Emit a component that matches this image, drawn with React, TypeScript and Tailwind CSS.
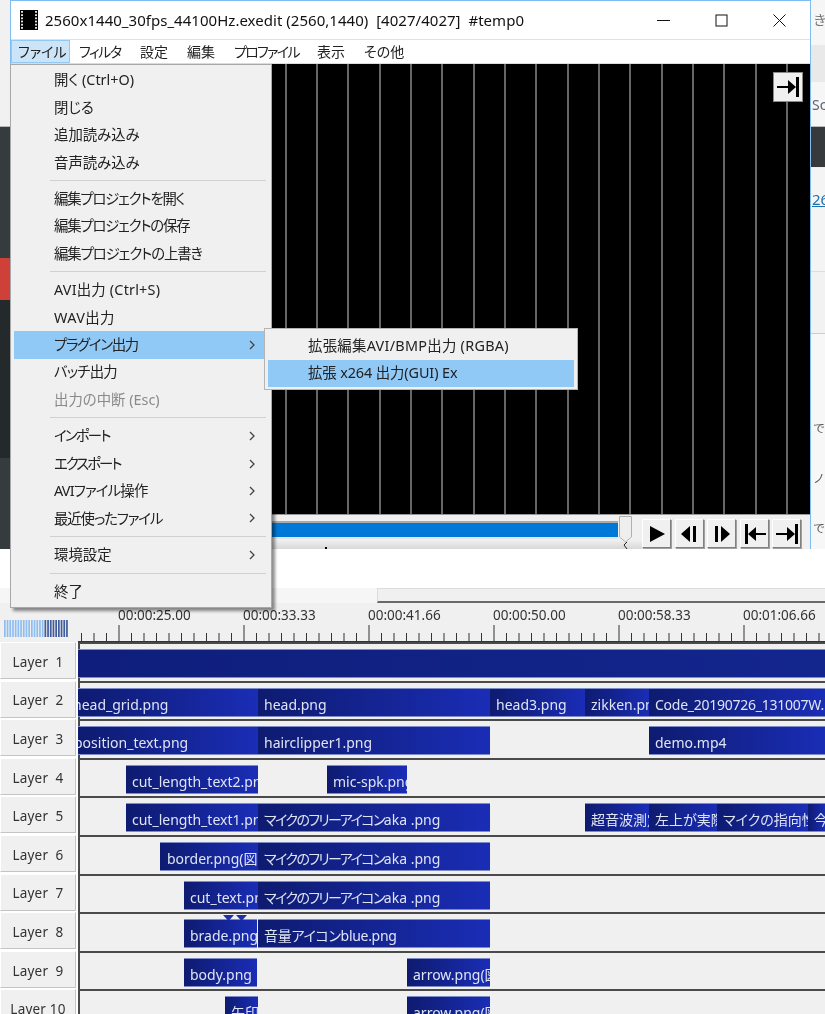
import React from "react";

type ClipDef = [number, number, React.ReactNode, number?, string?];

const aka = (
  <>
    <span className="tracking-[-1.6px]">マイクのフリーアイコン</span>aka .png
  </>
);

const rows: { label: string; clips: ClipDef[] }[] = [
  { label: "Layer  1", clips: [[78, 747, ""]] },
  {
    label: "Layer  2",
    clips: [
      [78, 180, "head_grid.png", -5],
      [258, 232, "head.png"],
      [490, 95, "head3.png"],
      [585, 64, "zikken.png"],
      [649, 176, "Code_20190726_131007W.mp4", 6, "tracking-[-0.25px]"],
    ],
  },
  {
    label: "Layer  3",
    clips: [
      [78, 180, "position_text.png", -4],
      [258, 232, "hairclipper1.png"],
      [649, 176, "demo.mp4"],
    ],
  },
  {
    label: "Layer  4",
    clips: [
      [126, 132, "cut_length_text2.png"],
      [327, 80, "mic-spk.png"],
    ],
  },
  {
    label: "Layer  5",
    clips: [
      [126, 132, "cut_length_text1.png"],
      [258, 232, aka],
      [585, 64, "超音波測定"],
      [649, 68, "左上が実際"],
      [717, 91, "マイクの指向性"],
      [808, 17, "今"],
    ],
  },
  {
    label: "Layer  6",
    clips: [
      [160, 98, "border.png(図形)", 7],
      [258, 232, aka],
    ],
  },
  {
    label: "Layer  7",
    clips: [
      [184, 74, "cut_text.png"],
      [258, 232, aka],
    ],
  },
  {
    label: "Layer  8",
    clips: [
      [184, 73, "brade.png"],
      [258, 232, "音量アイコンblue.png", 6, "tracking-[-0.3px]"],
    ],
  },
  {
    label: "Layer  9",
    clips: [
      [184, 73, "body.png"],
      [407, 83, "arrow.png(図形)"],
    ],
  },
  {
    label: "Layer 10",
    clips: [
      [225, 33, "矢印"],
      [407, 83, "arrow.png(図形)"],
    ],
  },
];

type MenuDef =
  | { text: string; arrow?: boolean; active?: boolean; disabled?: boolean; track?: string }
  | "sep";

const fileMenu: MenuDef[] = [
  { text: "開く (Ctrl+O)" },
  { text: "閉じる" },
  { text: "追加読み込み" },
  { text: "音声読み込み" },
  "sep",
  { text: "編集プロジェクトを開く", track: "tracking-[-1.2px]" },
  { text: "編集プロジェクトの保存", track: "tracking-[-1.2px]" },
  { text: "編集プロジェクトの上書き", track: "tracking-[-1.1px]" },
  "sep",
  { text: "AVI出力 (Ctrl+S)", track: "tracking-[0.2px]" },
  { text: "WAV出力", track: "tracking-[0.4px]" },
  { text: "プラグイン出力", arrow: true, active: true, track: "tracking-[-1.3px]" },
  { text: "バッチ出力", track: "tracking-[-0.8px]" },
  { text: "出力の中断 (Esc)", disabled: true },
  "sep",
  { text: "インポート", arrow: true, track: "tracking-[-1.8px]" },
  { text: "エクスポート", arrow: true, track: "tracking-[-2px]" },
  { text: "AVIファイル操作", arrow: true, track: "tracking-[-0.8px]" },
  { text: "最近使ったファイル", arrow: true, track: "tracking-[-1.1px]" },
  "sep",
  { text: "環境設定", arrow: true },
  "sep",
  { text: "終了" },
];

const menuBar: { text: string; width: string; track?: string; on?: boolean }[] = [
  { text: "ファイル", width: "w-[59px] mr-[2px]", on: true },
  { text: "フィルタ", width: "w-[61px]", track: "tracking-[-1.5px]" },
  { text: "設定", width: "w-[47px]" },
  { text: "編集", width: "w-[47px]" },
  { text: "プロファイル", width: "w-[83px]", track: "tracking-[-1.7px]" },
  { text: "表示", width: "w-[47px]" },
  { text: "その他", width: "w-[56px]" },
];

function Clip({ def }: { def: ClipDef }) {
  const [x, w, text, pad, track] = def;
  const tone = w > 700 ? "from-[#0f1e7c] to-[#13268e]" : "from-[#0e1b70] to-[#1a2db6]";
  return (
    <div
      className={`absolute top-[5px] h-[29px] flex items-center overflow-hidden whitespace-nowrap border-y border-[#7d8cc8] bg-gradient-to-r ${tone} text-[14px] text-[#dfe4f4] pt-[4px] [font-feature-settings:'palt']`}
      style={{ left: x - 80, width: w, paddingLeft: pad !== undefined && pad > 0 ? pad : pad === undefined ? 6 : 0 }}
    >
      <span className={track} style={pad !== undefined && pad < 0 ? { marginLeft: pad } : undefined}>
        {text}
      </span>
    </div>
  );
}

function LayerRow({ label, clips }: { label: string; clips: ClipDef[] }) {
  return (
    <div className="flex h-[38.6px] shrink-0">
      <div className="w-[76px] h-[37px] pt-[3px] flex items-center justify-center whitespace-pre text-[13.5px] tracking-[0.2px] text-[#333] bg-[#f0f0f0] border border-t-white border-l-white border-r-[#c4c4c4] border-b-[#c4c4c4]">
        {label}
      </div>
      <div className="relative ml-[2px] flex-1 border-t-2 border-l-2 border-[#4a4a4a] bg-[#f0f0f0]">
        {clips.map((c) => (
          <Clip key={c[0]} def={c} />
        ))}
        {label === "Layer  8" && (
          <svg className="absolute left-[143px] top-[1px]" width="26" height="6" viewBox="0 0 26 6">
            <path d="M0 0h11L5.5 6zM13 0h11l-5.500 6z" fill="#1e2fa8" />
          </svg>
        )}
      </div>
    </div>
  );
}

function Ruler() {
  const ticks = Array.from({ length: 60 }, (_, i) => 3.5 + i * 12.5);
  return (
    <svg className="absolute left-0 top-0" width="747" height="38" viewBox="0 0 747 38">
      <path d="M0 37.500H747" stroke="#333" strokeWidth="1" />
      {ticks.map((x, i) => (
        <path
          key={i}
          d={`M${x} ${(i + 7) % 10 === 0 ? 21 : 29}V37`}
          stroke="#333"
          strokeWidth="1"
        />
      ))}
    </svg>
  );
}

function PlayerButton({ children, className }: { children: React.ReactNode; className: string }) {
  return (
    <div
      className={`flex items-center justify-center w-[29px] h-[29px] bg-[#f0f0f0] border border-t-white border-l-white border-r-[#808080] border-b-[#808080] shadow-[1px_1px_0_#a0a0a0] ${className}`}
    >
      <svg width="24" height="22" viewBox="0 0 24 22" fill="#000">
        {children}
      </svg>
    </div>
  );
}

function Preview() {
  return (
    <div className="relative flex-1 bg-black overflow-hidden flex pl-[23px]">
      {Array.from({ length: 25 }, (_, i) => (
        <div key={i} className="w-[31.33px] shrink-0 border-l-2 border-[#666]" />
      ))}
      <div className="absolute right-[7px] top-[8px] w-[30px] h-[30px] flex items-center justify-center bg-[#f0f0f0] border border-[#8a8a8a]">
        <svg width="24" height="22" viewBox="0 0 24 22" fill="#000">
          <path d="M1 10h11V4l8 7-8 7v-6H1zM20 1h3v20h-3z" />
        </svg>
      </div>
    </div>
  );
}

function Toolbar() {
  return (
    <div className="relative h-[35px] shrink-0 bg-[#f0f0f0] border-t border-[#999]">
      <div className="absolute left-0 top-[6px] h-[18px] w-[607px] border-t-[2px] border-b-[2px] border-t-[#aaa] border-b-[#e4e4e4] bg-[#0078d7]" />
      <div className="absolute left-0 top-[25px] h-[9px] w-[631px] bg-gradient-to-b from-[#f0f0f0] to-[#d8d8d8]" />
      <svg className="absolute left-[607px] top-0" width="16" height="35" viewBox="0 0 16 35">
        <path d="M1.500 1.500H13.500V22L7.500 27L1.500 22Z" fill="#eeeeee" stroke="#b0b0b0" />
        <path d="M9 27L6 30L9 34" fill="none" stroke="#222" />
      </svg>
      <div className="absolute left-[314px] top-[32px] w-[2px] h-[2px] bg-black" />
      <div className="absolute left-[631px] top-[4px] flex">
        <PlayerButton className="">
          <path d="M5 3L20 11L5 19Z" />
        </PlayerButton>
        <PlayerButton className="ml-[4px]">
          <path d="M12 3V19L3 11ZM15 3h3v16h-3z" />
        </PlayerButton>
        <PlayerButton className="ml-[3px]">
          <path d="M5 3h3v16H5zM11 3L20 11L11 19Z" />
        </PlayerButton>
        <PlayerButton className="ml-[4px]">
          <path d="M2 1h3v20H2zM5 11L13 4v6h10v2H13v6z" />
        </PlayerButton>
        <PlayerButton className="ml-[3px]">
          <path d="M1 10h11V4l8 7-8 7v-6H1zM20 1h3v20h-3z" />
        </PlayerButton>
      </div>
    </div>
  );
}

function EditorWindow() {
  return (
    <div className="w-[801px] shrink-0 flex flex-col border-x border-t border-[#7fbcf2] bg-white">
      <div className="h-[39px] shrink-0 flex items-center border-b border-[#e2e2e2]">
        <svg className="ml-[9px]" width="18" height="20" viewBox="0 0 18 20">
          <rect width="18" height="20" fill="#000" />
          {Array.from({ length: 6 }, (_, i) => (
            <g key={i} fill="#ddd">
              <rect x="1" y={1 + i * 3.2} width="2" height="1.800" />
              <rect x="15" y={1 + i * 3.2} width="2" height="1.800" />
            </g>
          ))}
        </svg>
        <span className="ml-[7px] text-[15px] tracking-[0.03px] text-[#111] whitespace-pre">
          2560x1440_30fps_44100Hz.exedit (2560,1440)  [4027/4027]  #temp0
        </span>
        <div className="ml-auto mr-[2px] flex">
          <div className="w-[58px] h-[38px] flex items-center justify-center">
            <svg width="13" height="13" viewBox="0 0 13 13">
              <path d="M0 6.500H13" stroke="#111" />
            </svg>
          </div>
          <div className="w-[58px] h-[38px] flex items-center justify-center">
            <svg width="13" height="13" viewBox="0 0 13 13">
              <rect x="1" y="1" width="11" height="11" fill="none" stroke="#111" />
            </svg>
          </div>
          <div className="w-[58px] h-[38px] flex items-center justify-center">
            <svg width="13" height="13" viewBox="0 0 13 13">
              <path d="M0.500 0.500L12.500 12.500M12.500 0.500L0.500 12.500" stroke="#111" />
            </svg>
          </div>
        </div>
      </div>
      <div className="h-[24px] shrink-0 flex border-b border-[#dcdcdc] text-[14px] text-[#222] [font-feature-settings:'palt']">
        {menuBar.map((m) => (
          <div
            key={m.text}
            className={`${m.width} ${m.track ?? ""} flex items-center pl-[6px] pb-[1px] shrink-0 border ${
              m.on ? "bg-[#cce4f7] border-[#90c8f6]" : "border-transparent"
            }`}
          >
            {m.text}
          </div>
        ))}
      </div>
      <Preview />
      <Toolbar />
    </div>
  );
}

function FileMenu() {
  return (
    <div className="absolute left-[10px] top-[64px] w-[262px] h-[544px] pt-[1.5px] px-[3px] bg-[#f0f0f0] border border-[#a8a8a8] shadow-[3px_3px_3px_rgba(0,0,0,0.45)] text-[14.4px] text-[#222] [font-feature-settings:'palt']">
      {fileMenu.map((m, i) =>
        m === "sep" ? (
          <div key={i} className="h-[9.100px] flex items-center pl-[36px] pr-[2px]">
            <div className="h-[1px] w-full bg-[#d0d0d0]" />
          </div>
        ) : (
          <div
            key={i}
            className={`h-[27.400px] flex items-center pl-[40px] pr-[13px] whitespace-nowrap ${m.track ?? ""} ${
              m.active ? "bg-[#90c8f6]" : ""
            } ${m.disabled ? "text-[#8a8a8a]" : ""}`}
          >
            {m.text}
            {m.arrow && (
              <svg className="ml-auto" width="6" height="10" viewBox="0 0 6 10">
                <path d="M1 1L5 5L1 9" fill="none" stroke="#444" strokeWidth="1.300" />
              </svg>
            )}
          </div>
        )
      )}
    </div>
  );
}

function PluginSubmenu() {
  return (
    <div className="absolute left-[264px] top-[328px] w-[314px] h-[62px] p-[3px] bg-[#f0f0f0] border border-[#b4b4b4] text-[14.4px] text-[#222]">
      <div className="h-[27.500px] flex items-center pl-[40px] whitespace-nowrap tracking-[0.28px]">拡張編集AVI/BMP出力 (RGBA)</div>
      <div className="h-[27.500px] flex items-center pl-[40px] whitespace-nowrap tracking-[-0.1px] bg-[#90c8f6]">拡張 x264 出力(GUI) Ex</div>
    </div>
  );
}

function LeftBackdrop() {
  return (
    <div className="w-[10px] shrink-0 flex flex-col">
      <div className="h-[127px] bg-[#f1f1f1] border-b border-[#b8b8b8]" />
      <div className="h-[131px] bg-[#363b3e]" />
      <div className="h-[42px] bg-[#cf4038]" />
      <div className="h-[158px] bg-[#24292c]" />
      <div className="flex-1 bg-[#363b3e]" />
    </div>
  );
}

function RightBackdrop() {
  return (
    <div className="flex-1 flex flex-col overflow-hidden text-[14px] leading-none whitespace-nowrap">
      <div className="h-[45px] bg-[#f6f6f6] pt-[13px] pl-[2px] text-[#777]">き</div>
      <div className="h-[37px] bg-[#e9e9e9]" />
      <div className="h-[45px] bg-[#f6f6f6] pt-[16px] pl-[1px] text-[#5a6672] border-b border-[#bbb]">Sc</div>
      <div className="h-[40px] bg-[#363a3d]" />
      <div className="h-[104px] bg-[#f4f4f4] pt-[24px] pl-[1px] text-[15px] text-[#1a72b0] underline border-t border-[#eee]">26</div>
      <div className="h-[62px] bg-[#f2f2f2] border-t border-[#ddd]" />
      <div className="flex-1 bg-[#f7f7f7] border-t border-[#ccc] pl-[2px] pt-[89px] text-[12px] text-[#555]">
        <div className="h-[50px]">で</div>
        <div className="h-[50px]">ノ</div>
        <div>で</div>
      </div>
    </div>
  );
}

function ScaleWidget() {
  return (
    <svg className="ml-[4px] mt-[16px]" width="64" height="17" viewBox="0 0 64 17">
      {Array.from({ length: 24 }, (_, i) => (
        <rect key={i} x={i * 2.7} width="1.700" height="17" fill={i < 15 ? "#8fbdf0" : "#3f5c9c"} />
      ))}
    </svg>
  );
}

export default function App() {
  const times = ["00:00:25.00", "00:00:33.33", "00:00:41.66", "00:00:50.00", "00:00:58.33", "00:01:06.66"];
  return (
    <div className="relative w-[825px] h-[1014px] overflow-hidden bg-white [font-family:'Noto_Sans','Noto_Sans_CJK_JP',sans-serif] blur-[0.35px]">
      <div className="flex h-[549px]">
        <LeftBackdrop />
        <EditorWindow />
        <RightBackdrop />
      </div>
      <div className="h-[39px] bg-white" />
      <div className="flex h-[16px] bg-[#f0f0f0]">
        <div className="w-[377px] h-[15px] bg-[#f6f6f6]" />
        <div className="flex-1 h-[15px] bg-[#f0f0f0] border-l border-t border-l-[#dcdcdc] border-t-[#dcdcdc] border-b-2 border-b-[#6a6a6a]" />
      </div>
      <div className="h-[38px] relative bg-[#f0f0f0] flex">
        <ScaleWidget />
        <div className="absolute left-[78px] top-0 w-[747px] h-[38px]">
          <Ruler />
        </div>
        {times.map((t, i) => (
          <span
            key={t}
            className="absolute top-[2px] text-[13.5px] leading-[18px] text-[#333] whitespace-nowrap"
            style={{ left: 118 + i * 125 }}
          >
            {t}
          </span>
        ))}
      </div>
      <div className="flex flex-col">
        {rows.map((r) => (
          <LayerRow key={r.label} label={r.label} clips={r.clips} />
        ))}
      </div>
      <FileMenu />
      <PluginSubmenu />
    </div>
  );
}
